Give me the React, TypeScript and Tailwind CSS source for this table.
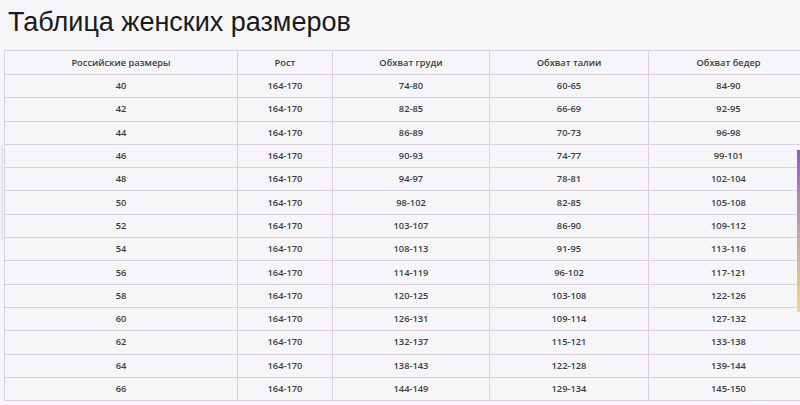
const rows: [string, string, string, string, string][] = [
  ["40", "164-170", "74-80", "60-65", "84-90"],
  ["42", "164-170", "82-85", "66-69", "92-95"],
  ["44", "164-170", "86-89", "70-73", "96-98"],
  ["46", "164-170", "90-93", "74-77", "99-101"],
  ["48", "164-170", "94-97", "78-81", "102-104"],
  ["50", "164-170", "98-102", "82-85", "105-108"],
  ["52", "164-170", "103-107", "86-90", "109-112"],
  ["54", "164-170", "108-113", "91-95", "113-116"],
  ["56", "164-170", "114-119", "96-102", "117-121"],
  ["58", "164-170", "120-125", "103-108", "122-126"],
  ["60", "164-170", "126-131", "109-114", "127-132"],
  ["62", "164-170", "132-137", "115-121", "133-138"],
  ["64", "164-170", "138-143", "122-128", "139-144"],
  ["66", "164-170", "144-149", "129-134", "145-150"],
];

const headers = ["Российские размеры", "Рост", "Обхват груди", "Обхват талии", "Обхват бедер"];
const widths = ["w-[233px]", "w-[95px]", "w-[157px]", "w-[159px]", "w-[160px]"];

export default function App() {
  return (
    <div className="relative w-[800px] h-[405px] overflow-hidden bg-[#f6f6f8]">
      <h1 className="pl-[8px] pt-[6px] h-[50px] text-[27px] leading-[33px] text-[#1a1a1a] font-['Liberation_Sans',Arial,sans-serif]">
        Таблица женских размеров
      </h1>

      <table className="ml-[4px] w-[805px] table-fixed border-collapse font-['Open_Sans',sans-serif] text-[9.3px] font-semibold text-[#3c3c3c]">
        <colgroup>
          {widths.map((w, i) => (
            <col key={i} className={w} />
          ))}
        </colgroup>
        <thead>
          <tr className="h-[24px]">
            {headers.map((h) => (
              <th key={h} className="border border-[#dccfdf] font-semibold text-center p-0">
                {h}
              </th>
            ))}
          </tr>
        </thead>
        <tbody>
          {rows.map((r) => (
            <tr key={r[0]} className="h-[23.3px]">
              {r.map((c, i) => (
                <td key={i} className="border border-[#dccfdf] text-center p-0">
                  {c}
                </td>
              ))}
            </tr>
          ))}
        </tbody>
      </table>

      {/* edge highlights from the source page */}
      <div className="absolute right-0 top-[150px] w-[3px] h-[162px] bg-gradient-to-b from-[#9a4fd8] via-[#d89aa0] to-[#f0d870]" />
      <div className="absolute left-[1px] top-[145px] w-[2px] h-[95px] bg-[#e2e2e6]" />
    </div>
  );
}
